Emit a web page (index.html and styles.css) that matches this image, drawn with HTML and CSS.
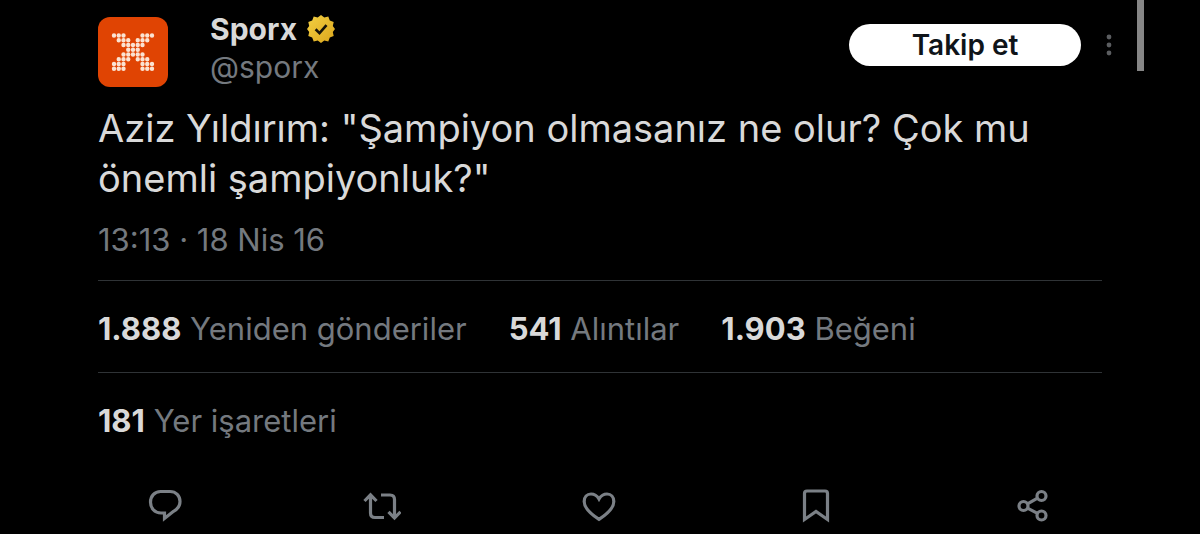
FILE: index.html
```html
<!DOCTYPE html>
<html lang="tr">
<head>
    <meta charset="UTF-8">
    <meta name="viewport" content="width=device-width, initial-scale=1.0">
    <title>Sporx</title>
    <link rel="stylesheet" href="styles.css">
</head>
<body>

    <article class="post">

        <!-- Account -->
        <header class="post-header">
            <a class="avatar" href="#" aria-label="Sporx">
                <svg viewBox="0 0 70 70" aria-hidden="true">
                    <g class="dots">
                        <path d="M16 18.500h9.600M44.500 18.500h9.600"/>
                        <path d="M20.750 23.250h9.600M39.750 23.250h9.600"/>
                        <path d="M25.500 28h19.100"/>
                        <path d="M30.250 32.750h9.600"/>
                        <path d="M25.500 37.500h19.100"/>
                        <path d="M20.750 42.250h9.600M39.750 42.250h9.600"/>
                        <path d="M16 47h9.600M44.500 47h9.600"/>
                        <path d="M16 51.750h9.600M44.500 51.750h9.600"/>
                    </g>
                </svg>
            </a>
            <div class="names">
                <div class="name-row">
                    <a class="name" href="#">Sporx</a>
                    <svg class="badge" viewBox="0 0 28 28" aria-hidden="true">
                        <defs>
                            <linearGradient id="gold" x1="0" y1="0" x2="1" y2="1">
                                <stop offset="0" stop-color="#f3d043"/>
                                <stop offset="1" stop-color="#dba61c"/>
                            </linearGradient>
                        </defs>
                        <path fill="url(#gold)" d="M14 0l3.300 2.600 4-1 1.500 3.900 3.900 1.500-.9 4L28 14l-2.200 3 .9 4-3.900 1.500-1.500 3.900-4-1L14 28l-3.300-2.600-4 1-1.500-3.900L1.300 21l.9-4L0 14l2.200-3-.9-4 3.900-1.500 1.500-3.900 4 1z"/>
                        <path fill="none" stroke="#15130a" stroke-width="2.600" d="M8.600 14.300l3.900 3.800 7-8"/>
                    </svg>
                </div>
                <a class="handle" href="#">@sporx</a>
            </div>
            <button class="follow" type="button">Takip et</button>
            <button class="more" type="button" aria-label="Diğer">
                <svg viewBox="0 0 6 22" aria-hidden="true">
                    <circle cx="3" cy="3" r="2.400"/>
                    <circle cx="3" cy="11" r="2.400"/>
                    <circle cx="3" cy="19" r="2.400"/>
                </svg>
            </button>
        </header>

        <p class="post-text">Aziz Yıldırım: "Şampiyon olmasanız ne olur? Çok mu önemli şampiyonluk?"</p>
        <time class="post-date" datetime="2016-04-18T13:13">13:13 · 18 Nis 16</time>

        <!-- Counters -->
        <div class="stats">
            <a href="#"><strong>1.888</strong> Yeniden gönderiler</a>
            <a href="#"><strong>541</strong> Alıntılar</a>
            <a href="#"><strong>1.903</strong> Beğeni</a>
        </div>
        <div class="stats">
            <a href="#"><strong>181</strong> Yer işaretleri</a>
        </div>

        <!-- Actions -->
        <div class="actions">
            <button type="button" aria-label="Yanıtla">
                <svg viewBox="0 0 34 34" width="34" height="34"><path d="M12.500 2.500h9.500C28 2.500 32 7 32 12.500c0 4.500-2.200 7.500-6.500 9.800L16.500 29.500v-5.500h-3.500C6.500 24 2.500 19 2.500 13.200S6.500 2.500 12.500 2.500z"/></svg>
            </button>
            <button type="button" aria-label="Yeniden gönder">
                <svg viewBox="0 0 38 34" width="38" height="34"><path d="M1.500 12L7.500 5.800 13.500 12M7.500 6.500v17.500q0 4.500 4.500 4.500h9M18 6h9q4.500 0 4.500 4.500v17.500M25.500 22.800l6 6.200 6-6.200"/></svg>
            </button>
            <button type="button" aria-label="Beğen">
                <svg viewBox="0 0 34 34" width="34" height="34"><path d="M17 10C14.500 5.800 11.500 5 9 5 5 5 2.200 8 2.200 12.500c0 7 6.500 12.500 14.800 17.800C25.300 25 31.800 19.500 31.800 12.500c0-4.500-2.800-7.500-6.800-7.500-2.500 0-5.500.8-8 5z"/></svg>
            </button>
            <button type="button" aria-label="Yer işareti ekle">
                <svg viewBox="0 0 28 34" width="28" height="34"><path d="M2.500 30.500V4.500q0-2.500 2.500-2.500h18q2.500 0 2.500 2.500v26L14 22.500z"/></svg>
            </button>
            <button type="button" aria-label="Paylaş">
                <svg viewBox="0 0 34 34" width="34" height="34"><circle cx="7.500" cy="17" r="4.500"/><circle cx="25.500" cy="7" r="4.500"/><circle cx="25.500" cy="26.500" r="4.500"/><path d="M11.500 14.800l10-5.600M11.500 19.200l10 5.200"/></svg>
            </button>
        </div>

    </article>

    <div class="scroll-thumb"></div>

</body>
</html>
```
FILE: styles.css
```css
* {
    box-sizing: border-box;
}

body {
    margin: 0;
    background-color: #000;
    color: #d9d9d9;
    font-family: 'Inter', 'Liberation Sans', sans-serif;
    font-size: 31px;
    line-height: 38px;
}

a {
    color: inherit;
    text-decoration: none;
}

button {
    padding: 0;
    border: none;
    background: none;
    font-family: inherit;
    cursor: pointer;
}

svg {
    display: block;
}

.post {
    padding: 10px 98px 0;
}

/* Account */
.post-header {
    display: flex;
    align-items: flex-start;
    margin-right: -10px;
}

.avatar {
    width: 70px;
    height: 70px;
    margin: 7px 42px 0 0;
    border-radius: 12px;
    background-color: #e04403;
}

.dots {
    fill: none;
    stroke: #fbe3d2;
    stroke-width: 4.4;
    stroke-linecap: round;
    stroke-dasharray: 0 4.75;
}

.names {
    flex: 1;
}

.name-row {
    display: flex;
    align-items: center;
    gap: 10px;
}

.name {
    font-size: 30px;
    font-weight: 700;
}

.badge {
    width: 28px;
    height: 28px;
}

.handle {
    color: #74797f;
    font-size: 30px;
}

.follow {
    width: 232px;
    height: 42px;
    margin-top: 14px;
    border-radius: 21px;
    background-color: #fff;
    color: #0f1419;
    font-size: 28px;
    font-weight: 600;
}

.more {
    margin: 24px 0 0 25px;
}

.more svg {
    width: 6px;
    height: 22px;
    fill: #5b5d60;
}

/* Text */
.post-text {
    margin: 16px 0 18px;
    font-size: 38px;
    line-height: 50px;
}

.post-date {
    display: block;
    padding-bottom: 21px;
    color: #74797f;
}

/* Counters */
.stats {
    display: flex;
    gap: 42px;
    padding: 29px 0 24px;
    border-top: 1px solid #2f3336;
    color: #74797f;
}

.stats strong {
    color: #d9d9d9;
    font-weight: 700;
}

/* Actions */
.actions {
    display: grid;
    grid-template-columns: repeat(5, 1fr);
    justify-items: center;
    margin: 0 -39px 0 -42px;
    padding: 25px 0 8px;
}

.actions svg {
    fill: none;
    stroke: #7b8086;
    stroke-width: 3.2;
}

.scroll-thumb {
    position: absolute;
    top: 0;
    right: 56px;
    width: 7px;
    height: 71px;
    background-color: #868686;
}
```
